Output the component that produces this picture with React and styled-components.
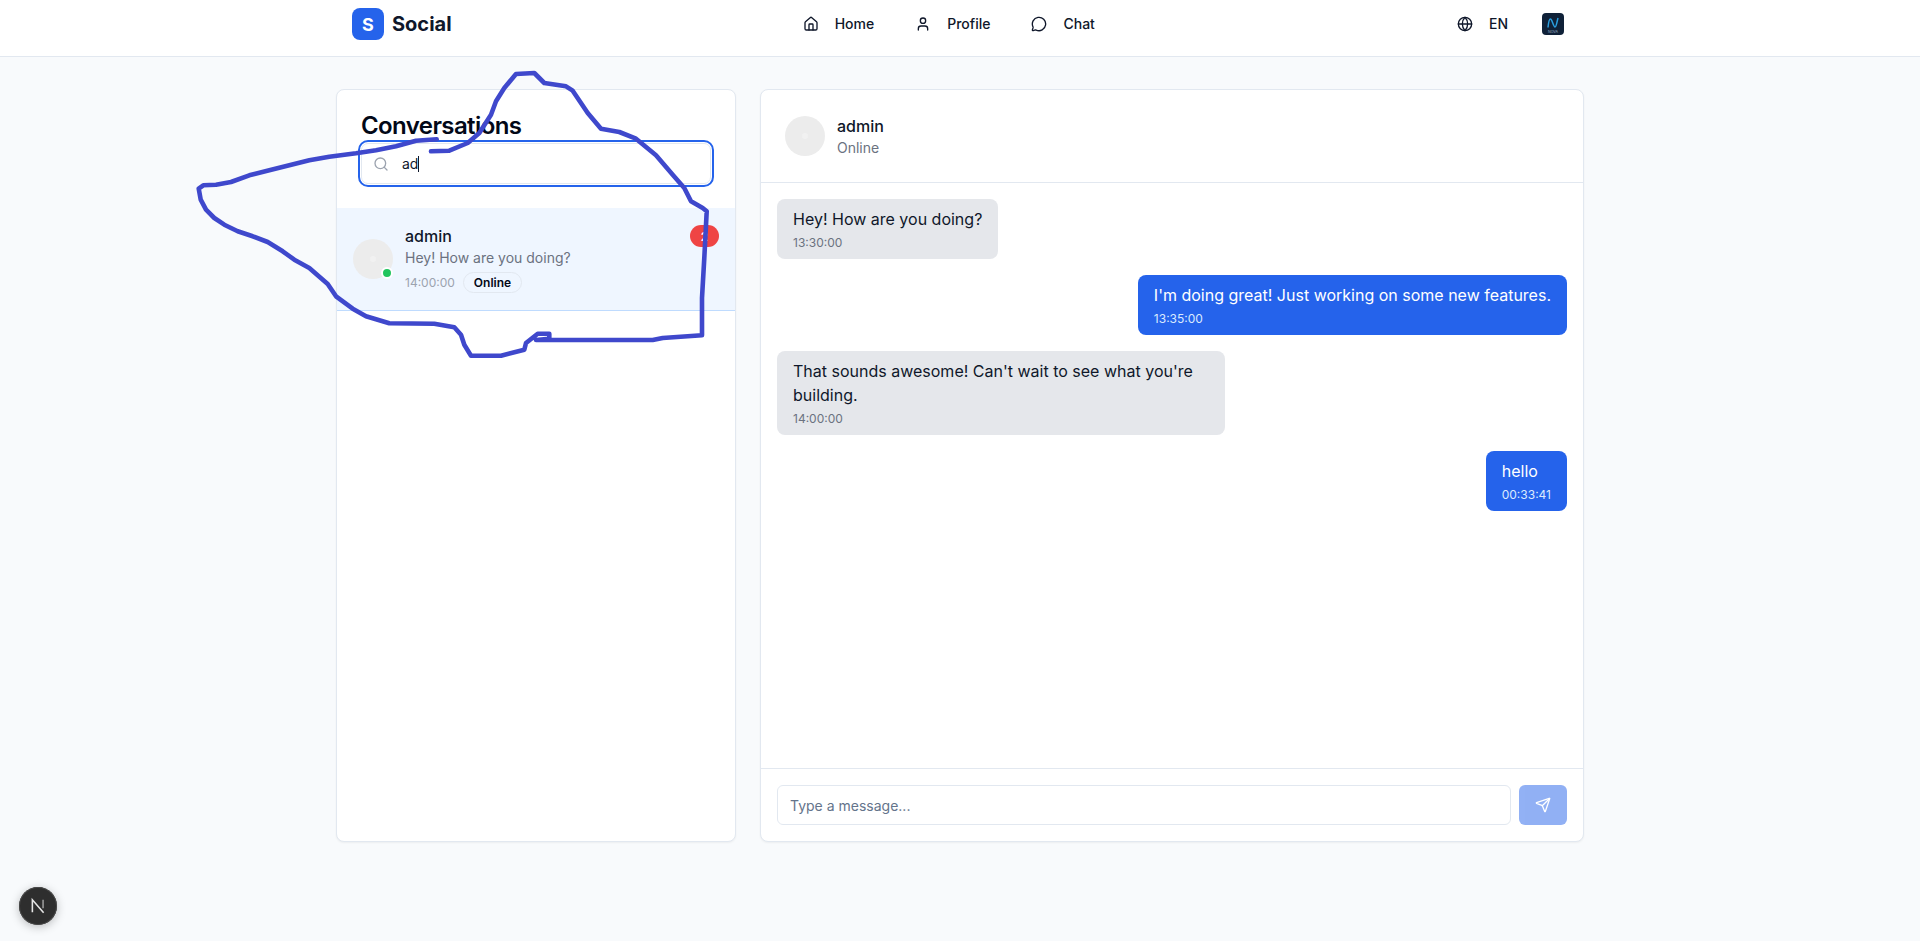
import React from "react";
import styled, { createGlobalStyle } from "styled-components";
import { House, User, MessageCircle, Globe, Search, Send } from "lucide-react";

const GlobalStyle = createGlobalStyle`
  * {
    box-sizing: border-box;
  }
  html, body {
    margin: 0;
    min-height: 100%;
  }
  body {
    background: #f8fafc;
    color: #0f172a;
    font-family: Inter, "Liberation Sans", sans-serif;
    overflow: hidden;
  }
`;

const Page = styled.div`
  position: relative;
  height: 941px;
`;

const NavBar = styled.header`
  height: 57px;
  background: #ffffff;
  border-bottom: 1px solid #e2e8f0;
`;

const NavInner = styled.div`
  width: 1280px;
  margin: 0 auto;
  padding: 8px 32px 0;
  height: 40px;
  display: flex;
  align-items: center;
  justify-content: space-between;
`;

const Brand = styled.div`
  display: flex;
  align-items: center;
  gap: 8px;
`;

const BrandMark = styled.div`
  width: 32px;
  height: 32px;
  border-radius: 8px;
  background: #2563eb;
  color: #ffffff;
  font-size: 18px;
  font-weight: 700;
  display: flex;
  align-items: center;
  justify-content: center;
`;

const BrandName = styled.span`
  font-size: 20px;
  line-height: 28px;
  font-weight: 700;
`;

const NavLinks = styled.nav`
  display: flex;
  align-items: center;
  gap: 41px;
`;

const NavLink = styled.a`
  display: flex;
  align-items: center;
  gap: 16px;
  font-size: 14px;
  line-height: 20px;
  font-weight: 500;
  color: #0f172a;
`;

const NavRight = styled.div`
  display: flex;
  align-items: center;
  padding: 0 4px 0 11px;
`;

const Lang = styled.div`
  display: flex;
  align-items: center;
  gap: 16px;
  font-size: 14px;
  line-height: 20px;
  font-weight: 500;
  margin-right: 34px;
`;

const UserLogo = styled.svg`
  display: block;
  width: 22px;
  height: 22px;
`;

const Main = styled.main`
  width: 1280px;
  margin: 0 auto;
  padding: 32px 16px;
  display: grid;
  grid-template-columns: repeat(3, 1fr);
  gap: 24px;
`;

const Card = styled.section`
  height: 753px;
  background: #ffffff;
  border: 1px solid #e2e8f0;
  border-radius: 8px;
  box-shadow: 0 1px 2px rgba(0, 0, 0, 0.05);
  display: flex;
  flex-direction: column;
  overflow: hidden;
  grid-column: ${props => (props.wide ? "span 2" : "span 1")};
`;

const SidebarHead = styled.div`
  padding: 24px 24px 24px;
`;

const Title = styled.h2`
  margin: 0 0 5px;
  font-size: 24px;
  line-height: 24px;
  font-weight: 600;
  letter-spacing: -0.6px;
  color: #020817;
`;

const SearchField = styled.div`
  height: 41px;
  padding-left: 11px;
  display: flex;
  align-items: center;
  gap: 13px;
  border: 1px solid #e2e8f0;
  border-radius: 7px;
  outline: 2px solid #2563eb;
  outline-offset: 1px;
  font-size: 14px;
  color: #0f172a;
  svg {
    color: #9ca3af;
  }
`;

const SearchText = styled.span`
  display: flex;
  align-items: center;
  line-height: 20px;
`;

const Caret = styled.i`
  display: block;
  width: 1px;
  height: 16px;
  background: #0f172a;
`;

const ConvItem = styled.div`
  display: flex;
  align-items: center;
  gap: 12px;
  padding: 16px 16px 17px;
  background: #eff6ff;
  border-bottom: 1px solid #bfdbfe;
`;

const Avatar = styled.div`
  position: relative;
  flex: none;
  width: 40px;
  height: 40px;
  border-radius: 50%;
  background: #ececec;
  display: flex;
  align-items: center;
  justify-content: center;
  &::before {
    content: "";
    width: 6px;
    height: 6px;
    border-radius: 50%;
    background: #f1f1f1;
  }
`;

const OnlineDot = styled.span`
  position: absolute;
  right: 0;
  bottom: 0;
  width: 12px;
  height: 12px;
  border-radius: 50%;
  background: #22c55e;
  border: 2px solid #ffffff;
`;

const ConvBody = styled.div`
  flex: 1;
  min-width: 0;
`;

const Name = styled.div`
  font-size: 16px;
  line-height: 24px;
  font-weight: 500;
`;

const Preview = styled.div`
  font-size: 14px;
  line-height: 20px;
  color: #6b7280;
`;

const MetaRow = styled.div`
  margin-top: 4px;
  display: flex;
  align-items: center;
  gap: 8px;
`;

const ListTime = styled.span`
  font-size: 12px;
  line-height: 16px;
  color: #9ca3af;
`;

const Pill = styled.span`
  height: 21px;
  padding: 0 10px;
  display: flex;
  align-items: center;
  border: 1px solid #e2e8f0;
  border-radius: 999px;
  font-size: 12px;
  font-weight: 600;
  color: #020817;
`;

const Badge = styled.span`
  flex: none;
  align-self: flex-start;
  margin-top: 1px;
  min-width: 29px;
  height: 22px;
  border-radius: 999px;
  background: #ef4444;
  color: #ffffff;
  font-size: 12px;
  font-weight: 600;
  display: flex;
  align-items: center;
  justify-content: center;
`;

const ChatHead = styled.div`
  padding: 24px;
  display: flex;
  align-items: center;
  gap: 12px;
  border-bottom: 1px solid #e2e8f0;
`;

const Messages = styled.div`
  flex: 1;
  padding: 16px;
  display: flex;
  flex-direction: column;
  gap: 16px;
`;

const Bubble = styled.div`
  align-self: ${props => (props.mine ? "flex-end" : "flex-start")};
  max-width: 448px;
  padding: 8px 16px;
  border-radius: 8px;
  background: ${props => (props.mine ? "#2563eb" : "#e5e7eb")};
  color: ${props => (props.mine ? "#ffffff" : "#0f172a")};
  font-size: 16px;
  line-height: 24px;
`;

const BubbleTime = styled.div`
  margin-top: 4px;
  font-size: 12px;
  line-height: 16px;
  color: ${props => (props.mine ? "#dbeafe" : "#6b7280")};
`;

const Composer = styled.form`
  margin: 0;
  padding: 16px;
  display: flex;
  gap: 8px;
  border-top: 1px solid #e2e8f0;
`;

const MessageInput = styled.input`
  flex: 1;
  height: 40px;
  padding: 0 12px;
  border: 1px solid #e2e8f0;
  border-radius: 6px;
  background: #ffffff;
  font-family: inherit;
  font-size: 14px;
  &::placeholder {
    color: #64748b;
    opacity: 1;
  }
`;

const SendButton = styled.button`
  width: 48px;
  height: 40px;
  border: 0;
  border-radius: 6px;
  background: #2563eb;
  opacity: 0.5;
  color: #ffffff;
  display: flex;
  align-items: center;
  justify-content: center;
`;

const DevBadge = styled.div`
  position: fixed;
  left: 19px;
  bottom: 16px;
  width: 38px;
  height: 38px;
  border-radius: 50%;
  background: #2e2e2e;
  box-shadow: 0 0 0 1px #4a4a4a inset, 0 2px 10px rgba(0, 0, 0, 0.25);
  display: flex;
  align-items: center;
  justify-content: center;
`;

const Scribble = styled.svg`
  position: absolute;
  left: 0;
  top: 0;
  width: 1920px;
  height: 941px;
  pointer-events: none;
`;

const MESSAGES = [
  { id: 1, text: "Hey! How are you doing?", time: "13:30:00" },
  { id: 2, text: "I'm doing great! Just working on some new features.", time: "13:35:00", mine: true },
  { id: 3, text: "That sounds awesome! Can't wait to see what you're building.", time: "14:00:00" },
  { id: 4, text: "hello", time: "00:33:41", mine: true },
];

// the hand-drawn loop someone put on top of the screenshot
const SCRIBBLE_POINTS =
  "436.7,139.3 416,140.7 396,146.3 376,150.3 356,153.3 329.3,156.7 309.3,160.3 289.3,165.3 269.3,170.3 249.3,175.3 231,182 216,184.7 203.3,185.3 198.7,188.7 200.7,199.7 206,209.7 214.3,218 224.3,224.7 237.7,231.3 252.7,236.3 267.7,242 282.7,251.3 294.3,259.7 309.3,268 327.7,284 336,296.3 352.7,308.7 366,316.3 389.3,323.3 434.3,323.7 454.3,327.3 461,334.7 464.3,344.7 471,355.7 501,355.7 524.3,349.7 526,343 537.7,333.7 549.3,333.7 549.3,338.7 536,340 652.7,340 662.7,338 702,335.3 702,298 704.3,258 706.7,211.3 702.7,208 691,201.3 684.3,188 672.7,174.7 656,155.3 636,138.7 619.3,132 601,128.7 587.7,113 572.7,90.7 566,86.3 544.3,83 534.3,73 516,74 504.3,88 496,101.3 491,114.7 479.3,133 467.7,143 449.3,150.7 431,151.3";

export default function App() {
  return (
    <Page>
      <GlobalStyle />
      <NavBar>
        <NavInner>
          <Brand>
            <BrandMark>S</BrandMark>
            <BrandName>Social</BrandName>
          </Brand>
          <NavLinks>
            <NavLink>
              <House size={16} />
              Home
            </NavLink>
            <NavLink>
              <User size={16} />
              Profile
            </NavLink>
            <NavLink>
              <MessageCircle size={16} />
              Chat
            </NavLink>
          </NavLinks>
          <NavRight>
            <Lang>
              <Globe size={16} />
              EN
            </Lang>
            <UserLogo viewBox="0 0 22 22">
              <rect width="22" height="22" rx="4" fill="#0f2138" />
              <path
                d="M6 14.5 C6.5 9 7.5 6 8.5 6 C10 6 11.5 14 13 14 C14.5 14 15 8 16 5"
                fill="none"
                stroke="#2a9fe0"
                strokeWidth="1.5"
              />
              <text x="11" y="20" fontSize="3.6" fill="#9fb3c8" textAnchor="middle">
                NOVA
              </text>
            </UserLogo>
          </NavRight>
        </NavInner>
      </NavBar>

      <Main>
        <Card>
          <SidebarHead>
            <Title>Conversations</Title>
            <SearchField>
              <Search size={16} />
              <SearchText>
                ad
                <Caret />
              </SearchText>
            </SearchField>
          </SidebarHead>
          <ConvItem>
            <Avatar>
              <OnlineDot />
            </Avatar>
            <ConvBody>
              <Name>admin</Name>
              <Preview>Hey! How are you doing?</Preview>
              <MetaRow>
                <ListTime>14:00:00</ListTime>
                <Pill>Online</Pill>
              </MetaRow>
            </ConvBody>
            <Badge>2</Badge>
          </ConvItem>
        </Card>

        <Card wide>
          <ChatHead>
            <Avatar />
            <div>
              <Name>admin</Name>
              <Preview>Online</Preview>
            </div>
          </ChatHead>
          <Messages>
            {MESSAGES.map(m => (
              <Bubble key={m.id} mine={m.mine}>
                {m.text}
                <BubbleTime mine={m.mine}>{m.time}</BubbleTime>
              </Bubble>
            ))}
          </Messages>
          <Composer>
            <MessageInput placeholder="Type a message..." />
            <SendButton type="button">
              <Send size={16} />
            </SendButton>
          </Composer>
        </Card>
      </Main>

      <DevBadge>
        <svg width="18" height="18" viewBox="0 0 16 16" fill="none">
          <path d="M3 13.5 V2.5 L13 14" stroke="#e6e6e6" strokeWidth="1.4" />
          <path d="M12.5 2.5 V10" stroke="#9a9a9a" strokeWidth="1.4" />
        </svg>
      </DevBadge>

      <Scribble viewBox="0 0 1920 941">
        <polyline
          points={SCRIBBLE_POINTS}
          fill="none"
          stroke="#3f48cc"
          strokeWidth="4.6"
          strokeLinecap="round"
          strokeLinejoin="round"
        />
      </Scribble>
    </Page>
  );
}
